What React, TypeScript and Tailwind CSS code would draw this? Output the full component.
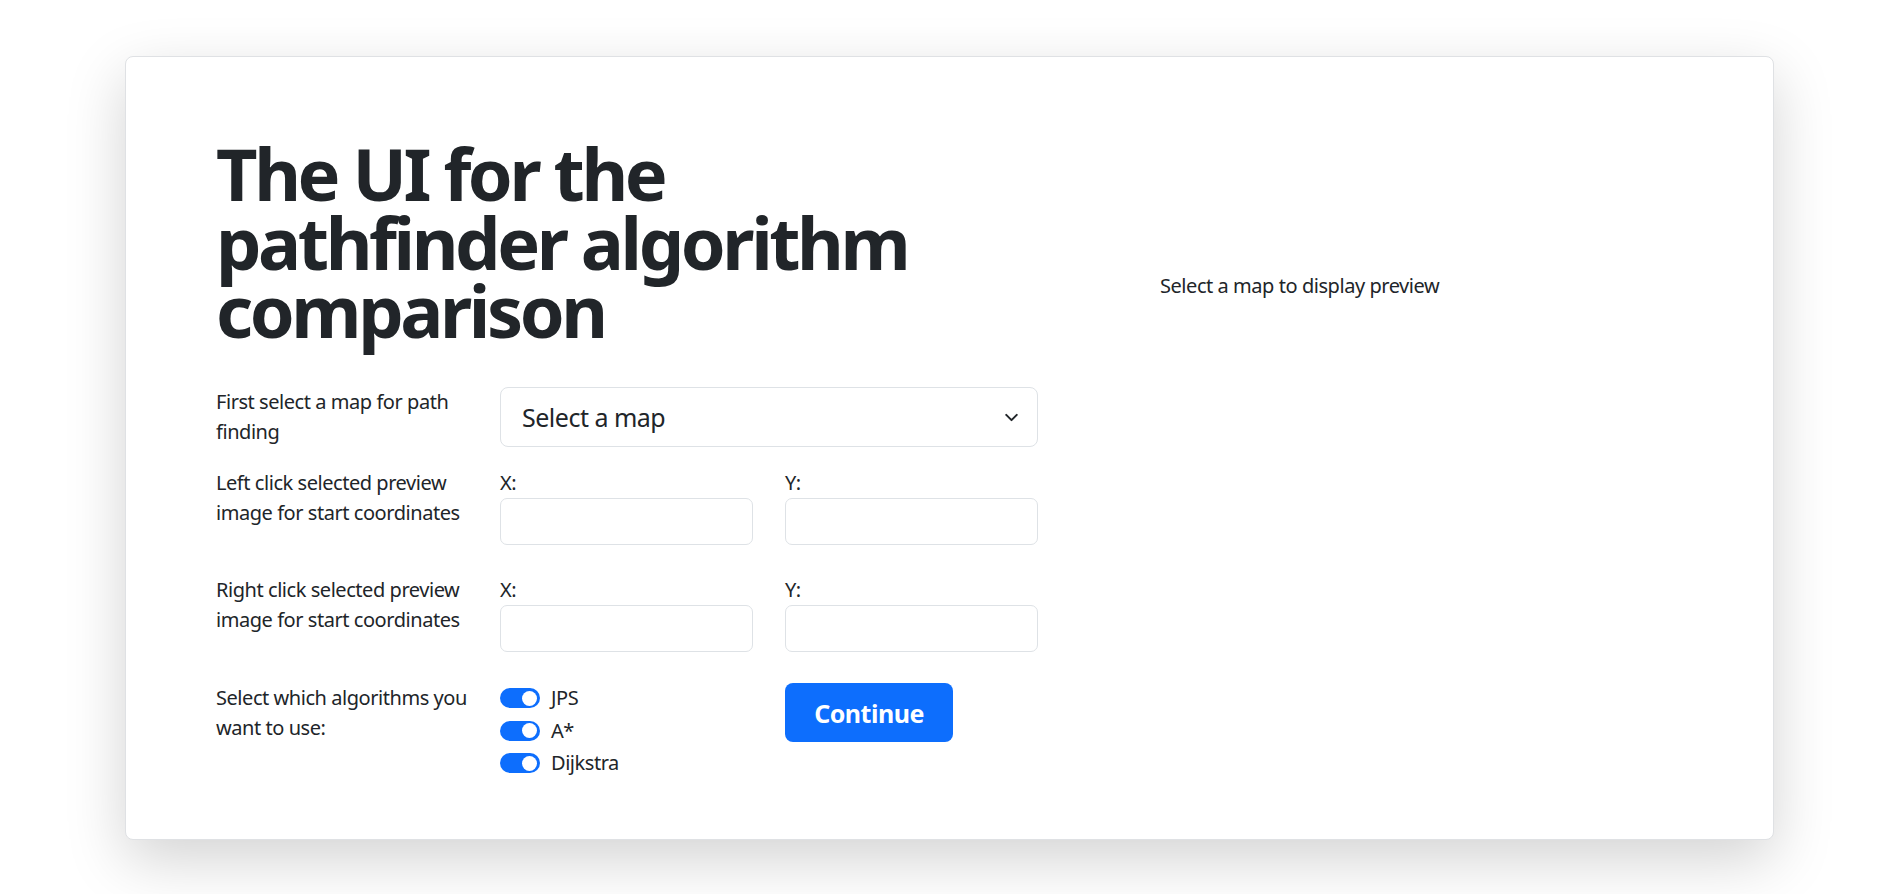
import { ChevronDown } from "lucide-react";

const font = { fontFamily: '"Noto Sans", "Open Sans", sans-serif' };

const algorithms = ["JPS", "A*", "Dijkstra"];

const Toggle = ({ label }: { label: string }) => (
  <div className="flex items-center h-[30px] mb-[2.5px]">
    <span className="relative w-[40px] h-[20px] rounded-full bg-[#0d6efd]">
      <span className="absolute right-[3px] top-[2.5px] w-[15px] h-[15px] rounded-full bg-white" />
    </span>
    <span className="ml-[11px]">{label}</span>
  </div>
);

const CoordRow = ({ title }: { title: string[] }) => (
  <div className="flex">
    <div className="w-[284px] shrink-0">
      {title[0]}
      <br />
      {title[1]}
    </div>
    <div className="flex gap-[32px] flex-1">
      <div className="flex-1">
        <div>X:</div>
        <input className="w-full h-[47px] border border-[#dee2e6] rounded-[7px] px-3 outline-none" />
      </div>
      <div className="flex-1">
        <div>Y:</div>
        <input className="w-full h-[47px] border border-[#dee2e6] rounded-[7px] px-3 outline-none" />
      </div>
    </div>
  </div>
);

export default function App() {
  return (
    <div
      className="min-h-screen bg-white pt-[56px] text-[#212529] text-[20px] leading-[30px] tracking-[-0.45px]"
      style={font}
    >
      <div className="ml-[125px] w-[1649px] h-[784px] bg-white border border-[#dfe1e4] rounded-[8px] shadow-[0_20px_60px_rgba(0,0,0,0.175)]">
        <div className="flex pl-[90px] pt-[82px]">
          <div className="w-[822px] shrink-0">
            <h1 className="text-[72px] leading-[68.7px] font-bold mb-[42px] tracking-[-3.4px]">
              The UI for the
              <br />
              pathfinder algorithm
              <br />
              comparison
            </h1>

            <div className="flex">
              <div className="w-[284px] shrink-0">
                First select a map for path
                <br />
                finding
              </div>
              <div className="relative flex-1 h-[60px] border border-[#dee2e6] rounded-[8px] flex items-center pl-[21px]">
                <span className="text-[25px] tracking-[-0.5px]">Select a map</span>
                <ChevronDown className="absolute right-[15px] top-[19px] w-[21px] h-[21px]" strokeWidth={2.3} />
              </div>
            </div>

            <div className="mt-[21px]">
              <CoordRow title={["Left click selected preview", "image for start coordinates"]} />
            </div>
            <div className="mt-[30px]">
              <CoordRow title={["Right click selected preview", "image for start coordinates"]} />
            </div>

            <div className="flex mt-[31px]">
              <div className="w-[284px] shrink-0">
                Select which algorithms you
                <br />
                want to use:
              </div>
              <div className="flex gap-[32px] flex-1">
                <div className="flex-1">
                  {algorithms.map((a) => (
                    <Toggle key={a} label={a} />
                  ))}
                </div>
                <div className="flex-1">
                  <button className="w-[168px] h-[59px] rounded-[8px] bg-[#0d6efd] text-white text-[25px] font-bold tracking-[-0.5px]">
                    Continue
                  </button>
                </div>
              </div>
            </div>
          </div>

          <div className="ml-[122px] pt-[132px]">Select a map to display preview</div>
        </div>
      </div>
    </div>
  );
}
